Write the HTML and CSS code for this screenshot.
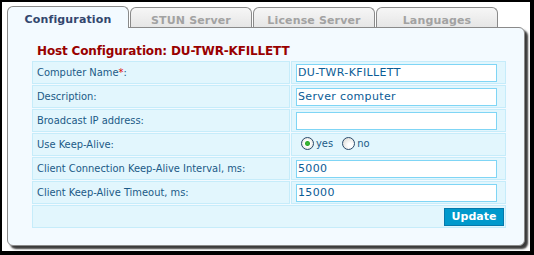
FILE: index.html
```html
<!DOCTYPE html>
<html lang="en">
<head>
<meta charset="UTF-8" />
<title>Host Configuration</title>
<link rel="stylesheet" href="styles.css">
</head>
<body>

<div class="frame">
  <ul class="tabs">
    <li class="tab active">Configuration</li>
    <li class="tab">STUN Server</li>
    <li class="tab">License Server</li>
    <li class="tab">Languages</li>
  </ul>

  <div class="panel">
    <h1>Host Configuration: DU-TWR-KFILLETT</h1>

    <table class="form">
      <tr>
        <td class="label">Computer Name<span class="req">*</span>:</td>
        <td class="value"><input type="text" value="DU-TWR-KFILLETT"></td>
      </tr>
      <tr>
        <td class="label">Description:</td>
        <td class="value"><input type="text" value="Server computer"></td>
      </tr>
      <tr>
        <td class="label">Broadcast IP address:</td>
        <td class="value"><input type="text" value=""></td>
      </tr>
      <tr>
        <td class="label">Use Keep-Alive:</td>
        <td class="value">
          <label class="radio"><input type="radio" name="keepalive" checked>yes</label>
          <label class="radio"><input type="radio" name="keepalive">no</label>
        </td>
      </tr>
      <tr>
        <td class="label">Client Connection Keep-Alive Interval, ms:</td>
        <td class="value"><input type="text" value="5000"></td>
      </tr>
      <tr>
        <td class="label">Client Keep-Alive Timeout, ms:</td>
        <td class="value"><input type="text" value="15000"></td>
      </tr>
      <tr>
        <td class="buttons" colspan="2"><button>Update</button></td>
      </tr>
    </table>
  </div>
</div>

</body>
</html>
```

FILE: styles.css
```css
html { background: #000; }
body { margin: 0; font-family: "DejaVu Sans", Verdana, sans-serif; }

.frame { margin: 2px 4px 4px 2px; height: 249px; background: #fff; padding-top: 4px; box-sizing: border-box; }

.tabs { list-style: none; margin: 0; padding: 0 0 0 5px; display: flex; align-items: flex-end; gap: 1px; height: 21px; }
.tab { width: 122px; height: 20px; box-sizing: border-box; border: 1px solid #8a8a8a; border-bottom: none; border-radius: 6px 6px 0 0;
  background: linear-gradient(#f6f6f6, #e6e6e6); color: #a2a2a2; font-size: 11px; font-weight: bold; letter-spacing: 0.15px;
  text-align: center; line-height: 13px; padding-top: 6px; }
.tab.active { height: 22px; margin-bottom: -1px; background: #f3faff; color: #33466e; position: relative; }

.panel { width: 518px; height: 219px; box-sizing: border-box; margin-left: 5px; border: 1px solid #8a8a8a; border-radius: 0 6px 6px 6px;
  background: #f3faff; box-shadow: 3px 3px 2px #3a3a3a; padding: 15px 0 0 23px; }

h1 { margin: 0 0 0 6px; font-size: 12px; line-height: 17px; letter-spacing: -0.15px; color: #990000; }

.form { border-spacing: 1px; width: 476px; font-family: "DejaVu Sans Condensed", "Liberation Sans", sans-serif; font-size: 11px; color: #1b5a87; }
.form td { height: 21px; padding: 0 4px; border: 1px solid #c6ecfa; background: #e2f6fd; vertical-align: middle; }
.form td.label { width: 248px; }
.req { color: #e00000; }

.form input[type=text] { width: 201px; height: 18px; box-sizing: border-box; margin: 0; padding: 0 1px; border: 1px solid #7fd5f5;
  font-family: "DejaVu Sans", Verdana, sans-serif; font-size: 11px; letter-spacing: 0.35px; color: #0b5c96; background: #fff; outline: none; }

.radio { display: inline-flex; align-items: center; margin-right: 1px; }
.radio input { appearance: none; width: 13px; height: 13px; margin: 0 2px 0 5px; border: 1px solid #2b4a6a; border-radius: 50%;
  background: radial-gradient(circle at 65% 65%, #fff 20%, #d6d3cc 100%); box-sizing: border-box; }
.radio input:checked { background: radial-gradient(circle, #3fbd3a 0, #2ea82a 2px, #fff 3px, #fff 20%, #d6d3cc 100%); }

.form td.buttons { text-align: right; padding: 0 1px; }
button { width: 60px; height: 18px; padding: 0; border: 1px solid #0678ab; background: #0099cc; color: #fff;
  font-family: "DejaVu Sans", Verdana, sans-serif; font-size: 11px; font-weight: bold; cursor: pointer; }
```
